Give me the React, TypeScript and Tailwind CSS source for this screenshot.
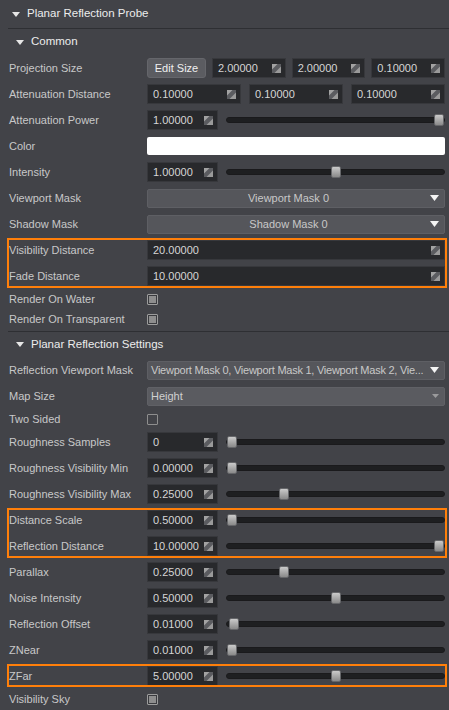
import React from "react";

const LABEL = "text-[#c8c8c8]";

function Tri({ color = "#e6e6e6" }: { color?: string }) {
  return (
    <svg width="8" height="5" viewBox="0 0 8 5" className="shrink-0">
      <polygon points="0,0 8,0 4,5" fill={color} />
    </svg>
  );
}

function ResizeIcon() {
  return (
    <svg width="9" height="9" viewBox="0 0 9 9" className="shrink-0">
      <rect width="9" height="9" fill="#5b5c60" />
      <polygon points="0,0 5.5,0 0,5.5" fill="#a3a3a3" />
      <polygon points="9,9 9,2.5 2.5,9" fill="#9a9a9a" />
    </svg>
  );
}

function Field({ value, className = "" }: { value: string; className?: string }) {
  return (
    <div
      className={
        "h-[20px] bg-[#28292c] border border-[#37383c] flex items-center justify-between pl-[5px] pr-[4px] text-[#d6d6d6] " +
        className
      }
    >
      <span className="whitespace-nowrap">{value}</span>
      <ResizeIcon />
    </div>
  );
}

function Slider({ pct }: { pct: number }) {
  return (
    <div className="relative flex-1 ml-[8px] h-[6px] rounded-full bg-[#1e1f21] border border-[#1a1a1c]">
      <div
        className="absolute top-1/2 -translate-y-1/2 w-[10px] h-[12px] rounded-[2px] bg-gradient-to-b from-[#cacaca] to-[#8a8a8a] border border-[#66676a]"
        style={{ left: `calc(${pct} * (100% - 10px))` }}
      />
    </div>
  );
}

function Dropdown({
  text,
  center = true,
  disabled = false,
  tight = false,
}: {
  text: string;
  center?: boolean;
  disabled?: boolean;
  tight?: boolean;
}) {
  return (
    <div
      className={
        "flex-1 min-w-0 h-[19px] rounded-[2px] border flex items-center pr-[5px] " +
        (disabled
          ? "bg-[#5a5b60] border-[#606166] text-[#d0d0d0] pl-[3px]"
          : "bg-[#55565b] border-[#5e5f64] text-[#c8c8c8] pl-[3px]")
      }
    >
      <span
        className={
          "flex-1 min-w-0 whitespace-nowrap " +
          (center ? "text-center " : "") +
          (tight ? "tracking-[-0.25px]" : "")
        }
      >
        {text}
      </span>
      {disabled ? (
        <svg width="7" height="4" viewBox="0 0 7 4" className="shrink-0 ml-[4px]">
          <polygon points="0,0 7,0 3.5,4" fill="#9a9a9c" />
        </svg>
      ) : (
        <svg width="9" height="6" viewBox="0 0 9 6" className="shrink-0 ml-[4px]">
          <polygon points="0,0 9,0 4.5,6" fill="#f4f4f4" />
        </svg>
      )}
    </div>
  );
}

function Checkbox({ checked }: { checked: boolean }) {
  return (
    <div className="w-[11px] h-[11px] border border-[#9c9c9c] rounded-[1px] p-[1px] bg-[#3a3b3f]">
      {checked && <div className="w-full h-full bg-[#8e8e8e]" />}
    </div>
  );
}

function Row({
  label,
  h = "h-[26px]",
  children,
}: {
  label: string;
  h?: string;
  children?: React.ReactNode;
}) {
  return (
    <div className={"flex items-center " + h}>
      <div className={"w-[147px] shrink-0 pl-[9px] whitespace-nowrap " + LABEL}>{label}</div>
      <div className="flex-1 flex items-center pr-[4px] min-w-0">{children}</div>
    </div>
  );
}

function Highlight({ children, bottom = "bottom-[1px]" }: { children: React.ReactNode; bottom?: string }) {
  return (
    <div className="relative">
      {children}
      <div className={"absolute top-[1px] left-[7px] right-[2px] border-2 border-[#ff7f0a] pointer-events-none " + bottom} />
    </div>
  );
}

function SliderRow({ label, value, pct }: { label: string; value: string; pct: number }) {
  return (
    <Row label={label}>
      <Field value={value} className="w-[71px] shrink-0" />
      <Slider pct={pct} />
    </Row>
  );
}

export default function App() {
  return (
    <div className="w-[449px] h-[710px] overflow-hidden bg-[#424348] text-[11px] leading-none font-['Liberation_Sans',Arial,sans-serif]">
      {/* Top header */}
      <div className="h-[29px] ml-[8px] pl-[4px] flex items-center gap-[7px] border-b border-[#2e2f33]">
        <Tri />
        <span className="text-[#ececec] text-[11.5px]">Planar Reflection Probe</span>
      </div>

      {/* Common */}
      <div className="h-[26px] pl-[16px] flex items-center gap-[7px]">
        <Tri />
        <span className="text-[#ececec] text-[11.5px]">Common</span>
      </div>

      <Row label="Projection Size">
        <div className="w-[59px] h-[20px] shrink-0 rounded-[3px] bg-[#5b5c61] border border-[#65666b] flex items-center justify-center text-[#f0f0f0]">
          Edit Size
        </div>
        <div className="flex-1 flex gap-[6px] ml-[6px]">
          <Field value="2.00000" className="flex-1" />
          <Field value="2.00000" className="flex-1" />
          <Field value="0.10000" className="flex-1" />
        </div>
      </Row>
      <Row label="Attenuation Distance">
        <div className="flex-1 flex gap-[8px]">
          <Field value="0.10000" className="flex-1" />
          <Field value="0.10000" className="flex-1" />
          <Field value="0.10000" className="flex-1" />
        </div>
      </Row>
      <SliderRow label="Attenuation Power" value="1.00000" pct={1} />
      <Row label="Color">
        <div className="flex-1 h-[18px] rounded-[2px] bg-white" />
      </Row>
      <SliderRow label="Intensity" value="1.00000" pct={0.5} />
      <Row label="Viewport Mask">
        <Dropdown text="Viewport Mask 0" />
      </Row>
      <Row label="Shadow Mask">
        <Dropdown text="Shadow Mask 0" />
      </Row>
      <Highlight>
        <Row label="Visibility Distance">
          <Field value="20.00000" className="flex-1" />
        </Row>
        <Row label="Fade Distance">
          <Field value="10.00000" className="flex-1" />
        </Row>
      </Highlight>
      <Row label="Render On Water" h="h-[20px]">
        <Checkbox checked />
      </Row>
      <Row label="Render On Transparent" h="h-[20px]">
        <Checkbox checked />
      </Row>
      <div className="h-[2px]" />

      {/* Planar Reflection Settings */}
      <div className="ml-[8px] h-[26px] pl-[8px] flex items-center gap-[7px] border-t border-[#2e2f33]">
        <Tri />
        <span className="text-[#ececec] text-[11.5px]">Planar Reflection Settings</span>
      </div>
      <Row label="Reflection Viewport Mask">
        <Dropdown text="Viewport Mask 0, Viewport Mask 1, Viewport Mask 2, Vie..." center={false} tight />
      </Row>
      <Row label="Map Size">
        <Dropdown text="Height" center={false} disabled />
      </Row>
      <Row label="Two Sided" h="h-[20px]">
        <div className="w-[11px] h-[11px] border border-[#8e8e8e] rounded-[1px]" />
      </Row>
      <SliderRow label="Roughness Samples" value="0" pct={0} />
      <SliderRow label="Roughness Visibility Min" value="0.00000" pct={0} />
      <SliderRow label="Roughness Visibility Max" value="0.25000" pct={0.25} />
      <Highlight>
        <SliderRow label="Distance Scale" value="0.50000" pct={0} />
        <SliderRow label="Reflection Distance" value="10.00000" pct={1} />
      </Highlight>
      <SliderRow label="Parallax" value="0.25000" pct={0.25} />
      <SliderRow label="Noise Intensity" value="0.50000" pct={0.5} />
      <SliderRow label="Reflection Offset" value="0.01000" pct={0.01} />
      <SliderRow label="ZNear" value="0.01000" pct={0} />
      <Highlight bottom="bottom-[2px]">
        <SliderRow label="ZFar" value="5.00000" pct={0.5} />
      </Highlight>
      <Row label="Visibility Sky" h="h-[20px]">
        <Checkbox checked />
      </Row>
    </div>
  );
}
